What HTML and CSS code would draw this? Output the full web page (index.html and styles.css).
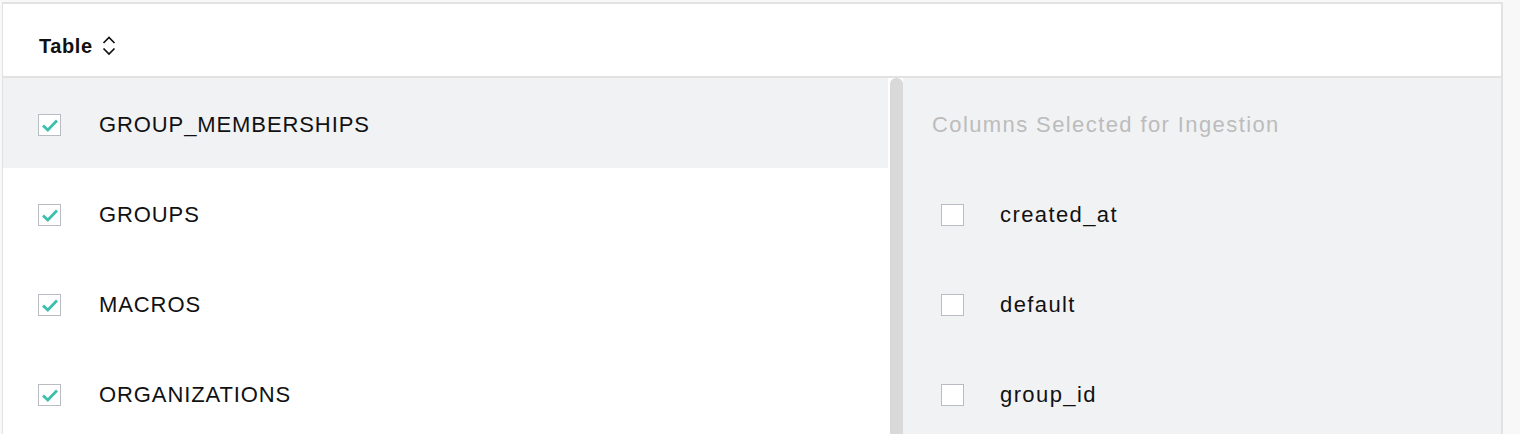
FILE: index.html
```html
<!DOCTYPE html>
<html lang="en">
<head>
    <meta charset="UTF-8">
    <meta name="viewport" content="width=device-width, initial-scale=1.0">
    <title>Table selection</title>
    <link rel="stylesheet" href="styles.css">
</head>
<body>
    <div class="table-box">
        <div class="table-header">
            <span class="header-label">Table</span>
            <svg class="sort-icon" width="14" height="22" viewBox="0 0 14 22">
                <path d="M1.5 8 L7 2.5 L12.5 8" fill="none" stroke="#111" stroke-width="1.7"/>
                <path d="M1.5 13.5 L7 19 L12.5 13.5" fill="none" stroke="#111" stroke-width="1.7"/>
            </svg>
        </div>
        <div class="table-body">
            <div class="tables">
                <div class="row active">
                    <span class="check checked">
                        <svg width="20" height="20" viewBox="0 0 20 20"><path d="M3 10.5 L7.8 15 L17 5.5" fill="none" stroke="#3dbfae" stroke-width="2.8"/></svg>
                    </span>
                    <span class="row-label">GROUP_MEMBERSHIPS</span>
                </div>
                <div class="row">
                    <span class="check checked">
                        <svg width="20" height="20" viewBox="0 0 20 20"><path d="M3 10.5 L7.8 15 L17 5.5" fill="none" stroke="#3dbfae" stroke-width="2.8"/></svg>
                    </span>
                    <span class="row-label">GROUPS</span>
                </div>
                <div class="row">
                    <span class="check checked">
                        <svg width="20" height="20" viewBox="0 0 20 20"><path d="M3 10.5 L7.8 15 L17 5.5" fill="none" stroke="#3dbfae" stroke-width="2.8"/></svg>
                    </span>
                    <span class="row-label">MACROS</span>
                </div>
                <div class="row">
                    <span class="check checked">
                        <svg width="20" height="20" viewBox="0 0 20 20"><path d="M3 10.5 L7.8 15 L17 5.5" fill="none" stroke="#3dbfae" stroke-width="2.8"/></svg>
                    </span>
                    <span class="row-label">ORGANIZATIONS</span>
                </div>
            </div>
            <div class="divider"></div>
            <div class="columns">
                <div class="columns-title">Columns Selected for Ingestion</div>
                <div class="col-row">
                    <span class="check"></span>
                    <span class="col-label">created_at</span>
                </div>
                <div class="col-row">
                    <span class="check"></span>
                    <span class="col-label">default</span>
                </div>
                <div class="col-row">
                    <span class="check"></span>
                    <span class="col-label">group_id</span>
                </div>
            </div>
        </div>
    </div>
</body>
</html>
```

FILE: styles.css
```css
body {
    margin: 0;
    background-color: #f8f8f8;
    font-family: "Liberation Sans", Arial, sans-serif;
    color: #111;
    overflow: hidden;
}
.table-box {
    margin: 2px 0 0 2px;
    width: 1498px;
    border: 2px solid #e2e2e2;
    border-bottom: none;
    border-left-width: 1px;
    background: #fff;
}
.table-header {
    height: 74px;
    border-bottom: 2px solid #e2e2e2;
    display: flex;
    align-items: center;
    padding: 12px 0 0 36px;
    box-sizing: border-box;
}
.header-label {
    font-size: 20px;
    font-weight: bold;
    letter-spacing: 0.6px;
}
.sort-icon {
    margin-left: 9px;
}
.table-body {
    display: flex;
    height: 360px;
}
.tables {
    width: 885px;
}
.row {
    height: 90px;
    display: flex;
    align-items: center;
    padding: 4px 0 0 35px;
    box-sizing: border-box;
}
.row.active {
    background: #f1f2f4;
}
.check {
    width: 21px;
    height: 20px;
    border: 1.5px solid #b9bcc3;
    background: #fff;
    display: flex;
    align-items: center;
    justify-content: center;
    flex-shrink: 0;
}
.row-label {
    margin-left: 38px;
    font-size: 22px;
    letter-spacing: 0.9px;
}
.divider {
    width: 13px;
    margin-left: 2px;
    background: #d9d9d9;
    border-radius: 6px 6px 0 0;
}
.columns {
    flex: 1;
    background: #f1f2f4;
    padding-left: 29px;
}
.columns-title {
    height: 90px;
    display: flex;
    align-items: center;
    padding-top: 4px;
    box-sizing: border-box;
    font-size: 22px;
    letter-spacing: 1.4px;
    color: #bcbcbc;
}
.col-row {
    height: 90px;
    display: flex;
    align-items: center;
    padding: 4px 0 0 9px;
    box-sizing: border-box;
}
.col-label {
    margin-left: 36px;
    font-size: 22px;
    letter-spacing: 1.4px;
}
```
